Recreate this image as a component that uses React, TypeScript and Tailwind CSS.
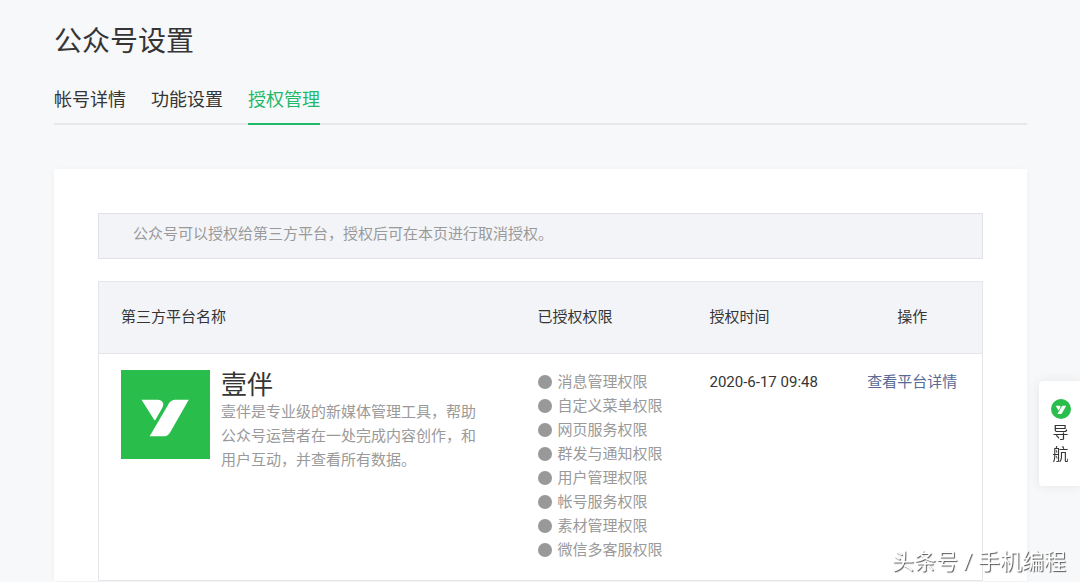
const tabs = ["帐号详情", "功能设置", "授权管理"];

const permissions = [
  "消息管理权限",
  "自定义菜单权限",
  "网页服务权限",
  "群发与通知权限",
  "用户管理权限",
  "帐号服务权限",
  "素材管理权限",
  "微信多客服权限",
];

const LogoMark = ({ className }: { className: string }) => (
  <svg viewBox="0 0 88 88" className={className} fill="#fff" aria-hidden="true">
    <path d="M20.3 29.3H36.5C41 29.3 43 33 41 37L34 49.5Q33.3 50 32.6 49Z" />
    <path d="M67 29.5H54.5C50.5 29.5 48.5 31 46.5 34.5L28.3 65.6H42C46 65.6 47.5 63.5 49.5 60Z" />
  </svg>
);

const Header = () => (
  <header>
    <h1 className="text-[28px] leading-10">公众号设置</h1>
    <nav className="mt-4 flex gap-[25px] border-b-2 border-[#e7e8eb]">
      {tabs.map((tab) => (
        <a
          key={tab}
          href="#"
          className={`-mb-0.5 border-b-2 pt-2 pb-[9px] text-[18px] leading-7 ${
            tab === "授权管理" ? "border-[#1fb96a] text-[#1fb96a]" : "border-transparent"
          }`}
        >
          {tab}
        </a>
      ))}
    </nav>
  </header>
);

const PlatformTable = () => (
  <table className="mt-[22px] w-full table-fixed border border-[#e4e6e9] text-left text-[15px] leading-6">
    <colgroup>
      <col />
      <col className="w-[172px]" />
      <col className="w-[156px]" />
      <col className="w-[140px]" />
    </colgroup>
    <thead>
      <tr className="h-[72px] border-b border-[#e4e6e9] bg-[#f3f4f8]">
        <th className="px-[22px] pb-0.5 font-normal">第三方平台名称</th>
        <th className="px-[23px] pb-0.5 font-normal">已授权权限</th>
        <th className="px-[23px] pb-0.5 font-normal">授权时间</th>
        <th className="pb-0.5 text-center font-normal">操作</th>
      </tr>
    </thead>
    <tbody>
      <tr className="align-top">
        <td className="px-[22px] pt-4">
          <div className="flex gap-[11px]">
            <div className="size-[89px] shrink-0 bg-[#29bd4b]">
              <LogoMark className="size-full" />
            </div>
            <div className="max-w-[264px]">
              <h2 className="text-[26px] leading-[30px]">壹伴</h2>
              <p className="text-[#9a9a9a]">
                壹伴是专业级的新媒体管理工具，帮助公众号运营者在一处完成内容创作，和用户互动，并查看所有数据。
              </p>
            </div>
          </div>
        </td>
        <td className="px-[23px] pt-4 pb-[18px] text-[#9a9a9a]">
          <ul>
            {permissions.map((name) => (
              <li key={name} className="flex items-center gap-1.5 whitespace-nowrap">
                <span className="size-3.5 rounded-full bg-[#999]" />
                {name}
              </li>
            ))}
          </ul>
        </td>
        <td className="px-[23px] pt-4 whitespace-nowrap">2020-6-17 09:48</td>
        <td className="pt-4 text-center">
          <a href="#" className="text-[#576b95]">
            查看平台详情
          </a>
        </td>
      </tr>
    </tbody>
  </table>
);

const App = () => {
  return (
    <div className="min-h-screen bg-[#f7f8fa] pt-[22px] pr-[53px] pl-[54px] font-[Roboto,'Noto_Sans_CJK_SC',sans-serif] text-[#353535]">
      <Header />
      <main className="mt-11 bg-white px-11 pt-11 shadow-[0_1px_6px_rgba(0,0,0,0.04)]">
        <p className="border border-[#e0e2e7] bg-[#f3f4f8] px-[34px] pt-2 pb-3 text-[15px] leading-6 text-[#9a9a9a]">
          公众号可以授权给第三方平台，授权后可在本页进行取消授权。
        </p>
        <PlatformTable />
      </main>

      {/* 右侧悬浮导航 */}
      <button className="fixed top-[381px] right-0 flex w-[41px] flex-col items-center rounded-l-sm bg-white pt-[18px] pb-5 pl-[2px] shadow-[0_0_12px_rgba(0,0,0,0.08)]">
        <span className="flex size-5 items-center justify-center rounded-full bg-[#29bd4b]">
          <LogoMark className="size-5" />
        </span>
        <span className="mt-[3px] w-4 text-[16px] leading-[22px]">导航</span>
      </button>

      <p className="fixed right-3.5 bottom-1 text-[22px] leading-8 text-white [text-shadow:1px_1px_1px_#555]">
        头条号 / 手机编程
      </p>
    </div>
  );
};

export default App;
